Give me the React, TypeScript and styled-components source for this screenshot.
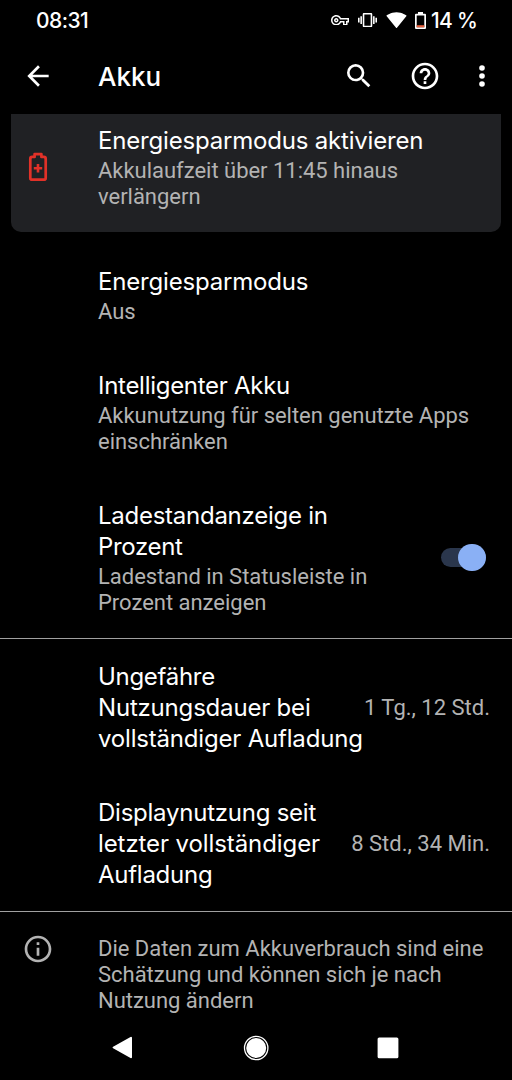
import React from "react";
import styled, { createGlobalStyle } from "styled-components";

const GlobalStyle = createGlobalStyle`
  * { box-sizing: border-box; }
  body { margin: 0; background: #000; }
`;

const Screen = styled.div`
  width: 512px;
  height: 1080px;
  background: #000;
  color: #fff;
  display: flex;
  flex-direction: column;
  overflow: hidden;
  font-family: Roboto, "Liberation Sans", sans-serif;
`;

const StatusBar = styled.header`
  height: 40px;
  flex: none;
  display: flex;
  align-items: center;
  justify-content: space-between;
  padding: 0 35px 0 36px;
`;

const StatusText = styled.span<{ $spacing?: number }>`
  padding-top: 1px;
  font: 500 21px/40px Inter, sans-serif;
  letter-spacing: ${(p) => p.$spacing ?? 0}px;
  white-space: nowrap;
`;

const StatusIcons = styled.div`
  display: flex;
  align-items: center;
  gap: 9px;
`;

const BatteryStatus = styled.div`
  display: flex;
  align-items: center;
  gap: 5px;
  margin-left: -1px;
`;

const Toolbar = styled.div`
  height: 74px;
  flex: none;
  display: flex;
  align-items: center;
  padding: 0 14px 2px 22px;
`;

const ToolbarTitle = styled.h1`
  margin: 0 auto 0 44px;
  padding-top: 2px;
  font: 500 26px/34px Inter, sans-serif;
  letter-spacing: 0;
`;

const ToolbarActions = styled.div`
  display: flex;
  align-items: center;
`;

const HelpButton = styled.div`
  margin: 0 25px 0 34px;
`;

const Icon = styled.svg<{ $w?: number; $h?: number; $color?: string }>`
  display: block;
  flex: none;
  width: ${(p) => p.$w ?? 32}px;
  height: ${(p) => p.$h ?? p.$w ?? 32}px;
  fill: ${(p) => p.$color ?? "#fff"};
`;

const Card = styled.section`
  height: 118px;
  flex: none;
  margin: 0 11px 11px;
  padding: 11px 11px 0;
  background: #202124;
  border-radius: 0 0 10px 10px;
  display: flex;
`;

const CardIcon = styled.div`
  width: 76px;
  padding: 27px 0 0 6px;
`;

const Row = styled.section<{ $height: number }>`
  height: ${(p) => p.$height}px;
  flex: none;
  padding: 23px 22px 0 98px;
  display: flex;
  justify-content: space-between;
`;

const Title = styled.div`
  font: 400 24px/31px Inter, sans-serif;
  font-weight: 370;
  white-space: nowrap;
`;

const Line = styled.span`
  display: block;
`;

const TitleLine = styled(Line)<{ $spacing?: number }>`
  letter-spacing: ${(p) => p.$spacing ?? -0.19}px;
`;

const Summary = styled.div`
  margin-top: 2px;
  font-size: 22px;
  line-height: 26px;
  letter-spacing: -0.02px;
  color: #b3b3b3;
  white-space: nowrap;
`;

const Value = styled.div`
  align-self: flex-start;
  margin-top: 34px;
  margin-left: -60px;
  font-size: 22px;
  line-height: 26px;
  color: #b3b3b3;
  white-space: nowrap;
`;

const Track = styled.div`
  width: 45px;
  height: 19px;
  margin: 48px 4px 0 0;
  border-radius: 10px;
  background: #2a364c;
  display: flex;
  align-items: center;
  justify-content: flex-end;
  padding-right: 0.5px;
`;

const Thumb = styled.div`
  width: 27.5px;
  height: 27.5px;
  flex: none;
  border-radius: 50%;
  background: #8ab0f5;
`;

const Divider = styled.hr`
  width: 100%;
  height: 1px;
  flex: none;
  margin: 0;
  border: 0;
  background: #a0a0a0;
`;

const UsageRow = styled(Row)`
  padding-top: 22px;
`;

const Footer = styled.section`
  height: 103px;
  flex: none;
  display: flex;
  gap: 44px;
  padding: 21px 22px 0;
`;

const FooterText = styled(Summary)`
  margin-top: 3px;
`;

const NavBar = styled.nav`
  height: 65px;
  flex: none;
  display: flex;
  align-items: center;
  padding-left: 112px;
`;

const NavHome = styled.div`
  margin: 0 108px 0 110px;
`;

const KeyIcon = () => (
  <Icon $w={18} $h={10.5} viewBox="0 5 24 14">
    <path d="M22 19h-6v-4h-2.68c-1.14 2.42-3.6 4-6.32 4-3.86 0-7-3.14-7-7s3.14-7 7-7c2.72 0 5.17 1.58 6.32 4H24v6h-2v4zm-4-2h2v-4h2v-2H11.94l-.23-.67C11.01 8.34 9.11 7 7 7c-2.76 0-5 2.24-5 5s2.24 5 5 5c2.11 0 4.01-1.34 4.71-3.33l.23-.67H18v4zM7 15c-1.65 0-3-1.35-3-3s1.35-3 3-3 3 1.35 3 3-1.35 3-3 3zm0-4c-.55 0-1 .45-1 1s.45 1 1 1 1-.45 1-1-.45-1-1-1z" />
  </Icon>
);

const VibrateIcon = () => (
  <Icon $w={19} $h={14.25} viewBox="0 3 24 18">
    <path d="M0 15h2V9H0v6zm3 2h2V7H3v10zm19-8v6h2V9h-2zm-3 8h2V7h-2v10zM16.5 3h-9C6.67 3 6 3.67 6 4.5v15c0 .83.67 1.5 1.5 1.5h9c.83 0 1.5-.67 1.5-1.5v-15c0-.83-.67-1.5-1.5-1.5zM16 19H8V5h8v14z" />
  </Icon>
);

const WifiIcon = () => (
  <Icon $w={21} $h={16.5} viewBox="0 3 24 18.5">
    <path d="M12.01 21.49L23.64 7c-.45-.34-4.93-4-11.64-4C5.28 3 .81 6.66.36 7l11.63 14.49.01.01.01-.01z" />
  </Icon>
);

const BatteryIcon = () => (
  <Icon $w={11} $h={17} viewBox="0 0 11 17">
    <path d="M3 0h5v1.7h2q1 0 1 1V16q0 1-1 1H1q-1 0-1-1V2.7q0-1 1-1h2zM1.7 3.4v11.9h7.6V3.4z" fillRule="evenodd" />
    <path d="M1.7 13.2h7.6v2.1H1.7z" fill="#e8603c" />
  </Icon>
);

export default function App() {
  return (
    <Screen>
      <GlobalStyle />
      <StatusBar>
        <StatusText $spacing={-0.55}>08:31</StatusText>
        <StatusIcons>
          <KeyIcon />
          <VibrateIcon />
          <WifiIcon />
          <BatteryStatus>
            <BatteryIcon />
            <StatusText $spacing={-0.75}>14 %</StatusText>
          </BatteryStatus>
        </StatusIcons>
      </StatusBar>
      <Toolbar>
        <Icon viewBox="0 0 24 24">
          <path d="M20 11H7.83l5.59-5.59L12 4l-8 8 8 8 1.41-1.41L7.83 13H20v-2z" />
        </Icon>
        <ToolbarTitle>Akku</ToolbarTitle>
        <ToolbarActions>
          <Icon viewBox="0 0 24 24">
            <path d="M15.5 14h-.79l-.28-.27A6.471 6.471 0 0 0 16 9.5 6.5 6.5 0 1 0 9.5 16c1.61 0 3.09-.59 4.23-1.57l.27.28v.79l5 4.99L20.49 19l-4.99-5zm-6 0C7.01 14 5 11.99 5 9.5S7.01 5 9.5 5 14 7.01 14 9.5 11.99 14 9.5 14z" />
          </Icon>
          <HelpButton>
            <Icon viewBox="0 0 24 24">
              <path d="M11 18h2v-2h-2v2zm1-16C6.48 2 2 6.48 2 12s4.48 10 10 10 10-4.48 10-10S17.52 2 12 2zm0 18c-4.41 0-8-3.59-8-8s3.59-8 8-8 8 3.59 8 8-3.59 8-8 8zm0-14c-2.21 0-4 1.79-4 4h2c0-1.1.9-2 2-2s2 .9 2 2c0 2-3 1.75-3 5h2c0-2.25 3-2.5 3-5 0-2.21-1.79-4-4-4z" />
            </Icon>
          </HelpButton>
          <Icon viewBox="0 0 24 24">
            <circle cx="12" cy="6" r="2.1" />
            <circle cx="12" cy="12" r="2.1" />
            <circle cx="12" cy="18" r="2.1" />
          </Icon>
        </ToolbarActions>
      </Toolbar>
      <Card>
        <CardIcon>
          <Icon $w={20} $h={30} $color="#e13128" viewBox="0 0 20 30">
            <path
              d="M6.6 2.2h6.8v2.7h2.5q1.8 0 1.8 1.8v19.2q0 1.8-1.8 1.8H4.1q-1.8 0-1.8-1.8V6.7q0-1.8 1.8-1.8h2.5z"
              fill="none"
              stroke="#e13128"
              strokeWidth="2.7"
              strokeLinejoin="round"
            />
            <path d="M8.7 12.1h2.6V15h2.9v2.6h-2.9v2.9H8.7v-2.9H5.8V15h2.9z" />
          </Icon>
        </CardIcon>
        <div>
          <Title><TitleLine>Energiesparmodus aktivieren</TitleLine></Title>
          <Summary><Line>Akkulaufzeit über 11:45 hinaus</Line><Line>verlängern</Line></Summary>
        </div>
      </Card>
      <Row $height={104}>
        <div>
          <Title><TitleLine>Energiesparmodus</TitleLine></Title>
          <Summary><Line>Aus</Line></Summary>
        </div>
      </Row>
      <Row $height={130}>
        <div>
          <Title><TitleLine $spacing={-0.28}>Intelligenter Akku</TitleLine></Title>
          <Summary><Line>Akkunutzung für selten genutzte Apps</Line><Line>einschränken</Line></Summary>
        </div>
      </Row>
      <Row $height={161}>
        <div>
          <Title>
            <TitleLine $spacing={-0.26}>Ladestandanzeige in</TitleLine>
            <TitleLine $spacing={-0.35}>Prozent</TitleLine>
          </Title>
          <Summary><Line>Ladestand in Statusleiste in</Line><Line>Prozent anzeigen</Line></Summary>
        </div>
        <Track><Thumb /></Track>
      </Row>
      <Divider />
      <UsageRow $height={136}>
        <Title>
          <TitleLine $spacing={-0.3}>Ungefähre</TitleLine>
          <TitleLine>Nutzungsdauer bei</TitleLine>
          <TitleLine>vollständiger Aufladung</TitleLine>
        </Title>
        <Value>1 Tg., 12 Std.</Value>
      </UsageRow>
      <UsageRow $height={136}>
        <Title>
          <TitleLine $spacing={-0.24}>Displaynutzung seit</TitleLine>
          <TitleLine $spacing={-0.09}>letzter vollständiger</TitleLine>
          <TitleLine $spacing={-0.26}>Aufladung</TitleLine>
        </Title>
        <Value>8 Std., 34 Min.</Value>
      </UsageRow>
      <Divider />
      <Footer>
        <Icon $color="#b3b3b3" viewBox="0 0 24 24">
          <path d="M11 7h2v2h-2zm0 4h2v6h-2zm1-9C6.48 2 2 6.48 2 12s4.48 10 10 10 10-4.48 10-10S17.52 2 12 2zm0 18c-4.41 0-8-3.59-8-8s3.59-8 8-8 8 3.59 8 8-3.59 8-8 8z" />
        </Icon>
        <FooterText>
          <Line>Die Daten zum Akkuverbrauch sind eine</Line>
          <Line>Schätzung und können sich je nach</Line>
          <Line>Nutzung ändern</Line>
        </FooterText>
      </Footer>
      <NavBar>
        <Icon $w={21} $h={23} viewBox="0 0 21 23">
          <path d="M1.6 11.5 19 1.8v19.4z" stroke="#fff" strokeWidth="2" strokeLinejoin="round" />
        </Icon>
        <NavHome>
          <Icon $w={26} viewBox="0 0 26 26">
            <circle cx="13.2" cy="13" r="11.7" fill="none" stroke="#fff" strokeWidth="1.3" />
            <circle cx="13.2" cy="13" r="10" />
          </Icon>
        </NavHome>
        <Icon $w={22} viewBox="0 0 22 22">
          <rect x="0.6" y="0.5" width="20.8" height="20.8" rx="1.6" />
        </Icon>
      </NavBar>
    </Screen>
  );
}
